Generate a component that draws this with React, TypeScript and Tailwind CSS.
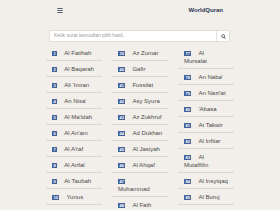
import React from "react";

const surahs: string[] = [
  "Al Fatihah", "Al Baqarah", "Ali 'Imran", "An Nisa'", "Al Ma'idah", "Al An'am", "Al A'raf", "Al Anfal", "At Taubah", "Yunus",
  "Hud", "Yusuf", "Ar Ra'd", "Ibrahim", "Al Hijr", "An Nahl", "Al Isra'", "Al Kahf", "Maryam", "Taha",
  "Al Anbiya", "Al Hajj", "Al Mu'minun", "An Nur", "Al Furqan", "Asy Syu'ara'", "An Naml", "Al Qasas", "Al 'Ankabut", "Ar Rum",
  "Luqman", "As Sajdah", "Al Ahzab", "Saba'", "Fatir", "Yasin", "As Saffat", "Sad",
  "Az Zumar", "Gafir", "Fussilat", "Asy Syura", "Az Zukhruf", "Ad Dukhan", "Al Jasiyah", "Al Ahqaf", "\nMuhammad", "Al Fath",
  "Al Hujurat", "Qaf", "Az Zariyat", "At Tur", "An Najm", "Al Qamar", "Ar Rahman", "Al Waqi'ah", "Al Hadid", "Al Mujadilah",
  "Al Hasyr", "Al Mumtahanah", "As Saff", "Al Jumu'ah", "Al Munafiqun", "At Tagabun", "At Talaq", "At Tahrim", "Al Mulk", "Al Qalam",
  "Al Haqqah", "Al Ma'arij", "Nuh", "Al Jinn", "Al Muzzammil", "Al Muddassir", "Al Qiyamah", "Al Insan",
  "Al\nMursalat", "An Naba'", "An Nazi'at", "'Abasa", "At Takwir", "Al Infitar", "Al\nMutaffifin", "Al Insyiqaq", "Al Buruj", "At Tariq",
  "Al A'la", "Al Gasyiyah", "Al Fajr", "Al Balad", "Asy Syams", "Al Lail", "Ad Duha", "Asy Syarh", "At Tin", "Al 'Alaq",
  "Al Qadr", "Al Bayyinah", "Az Zalzalah", "Al 'Adiyat", "Al Qari'ah", "At Takasur", "Al 'Asr", "Al Humazah", "Al Fil", "Quraisy",
  "Al Ma'un", "Al Kausar", "Al Kafirun", "An Nasr", "Al Lahab", "Al Ikhlas", "Al Falaq", "An Nas",
];

function Item({ n, name }: { n: number; name: string }) {
  const parts = name.split("\n");
  return (
    <li className="border-b border-[#dcd7d1] pl-[6px] pr-[3px] pt-[4px] pb-[3px] leading-[8px] text-[6px] text-[#4a4a4a]">
      <span className="mr-[7px] inline-block h-[5px] min-w-[5px] bg-[#41629a] px-[1.5px] text-center align-middle text-[4px] font-bold leading-[5px] text-white">
        {n}
      </span>
      <span className="whitespace-nowrap">
        {parts.map((p, i) => (
          <React.Fragment key={i}>
            {i > 0 && <br />}
            {p}
          </React.Fragment>
        ))}
      </span>
    </li>
  );
}

export default function App() {
  const cols = [surahs.slice(0, 38), surahs.slice(38, 76), surahs.slice(76)];
  const offsets = [1, 39, 77];
  return (
    <div className="min-h-screen w-full bg-[#f2eee9]" style={{ fontFamily: '"Liberation Sans", Arial, sans-serif' }}>
      <div className="mx-auto w-[188px]">
        <header className="flex h-[21px] items-center justify-between px-[11px]">
          <svg width="6" height="6" viewBox="0 0 6 6" className="mt-[-2px]">
            <rect x="0.3" y="1" width="5.4" height="1" fill="#59606f" />
            <rect x="0.3" y="3" width="5.4" height="1" fill="#59606f" />
            <rect x="0.3" y="5" width="5.4" height="1" fill="#59606f" />
          </svg>
          <span className="text-[6px] font-bold text-[#2b3650]">WorldQuran</span>
        </header>
        <div className="mt-[9px] ml-[3px] mr-[4px] flex h-[12px] border border-[#e3dfda] bg-white">
          <input
            className="min-w-0 flex-1 bg-transparent pl-[4px] text-[5px] text-[#555] outline-none placeholder:text-[#9a9a9a]"
            placeholder="Ketik surat kemudian pilih hasil."
          />
          <div className="flex w-[13px] items-center justify-center border-l border-[#e3dfda]">
            <svg width="5" height="5" viewBox="0 0 10 10">
              <circle cx="4.2" cy="4.2" r="3" fill="none" stroke="#555" strokeWidth="1.6" />
              <line x1="6.4" y1="6.4" x2="9" y2="9" stroke="#555" strokeWidth="1.8" strokeLinecap="round" />
            </svg>
          </div>
        </div>
        <div className="mt-[3px] grid grid-cols-3 gap-x-[10px]">
          {cols.map((c, ci) => (
            <ul key={ci}>
              {c.map((name, i) => (
                <Item key={i} n={offsets[ci] + i} name={name} />
              ))}
            </ul>
          ))}
        </div>
      </div>
    </div>
  );
}
